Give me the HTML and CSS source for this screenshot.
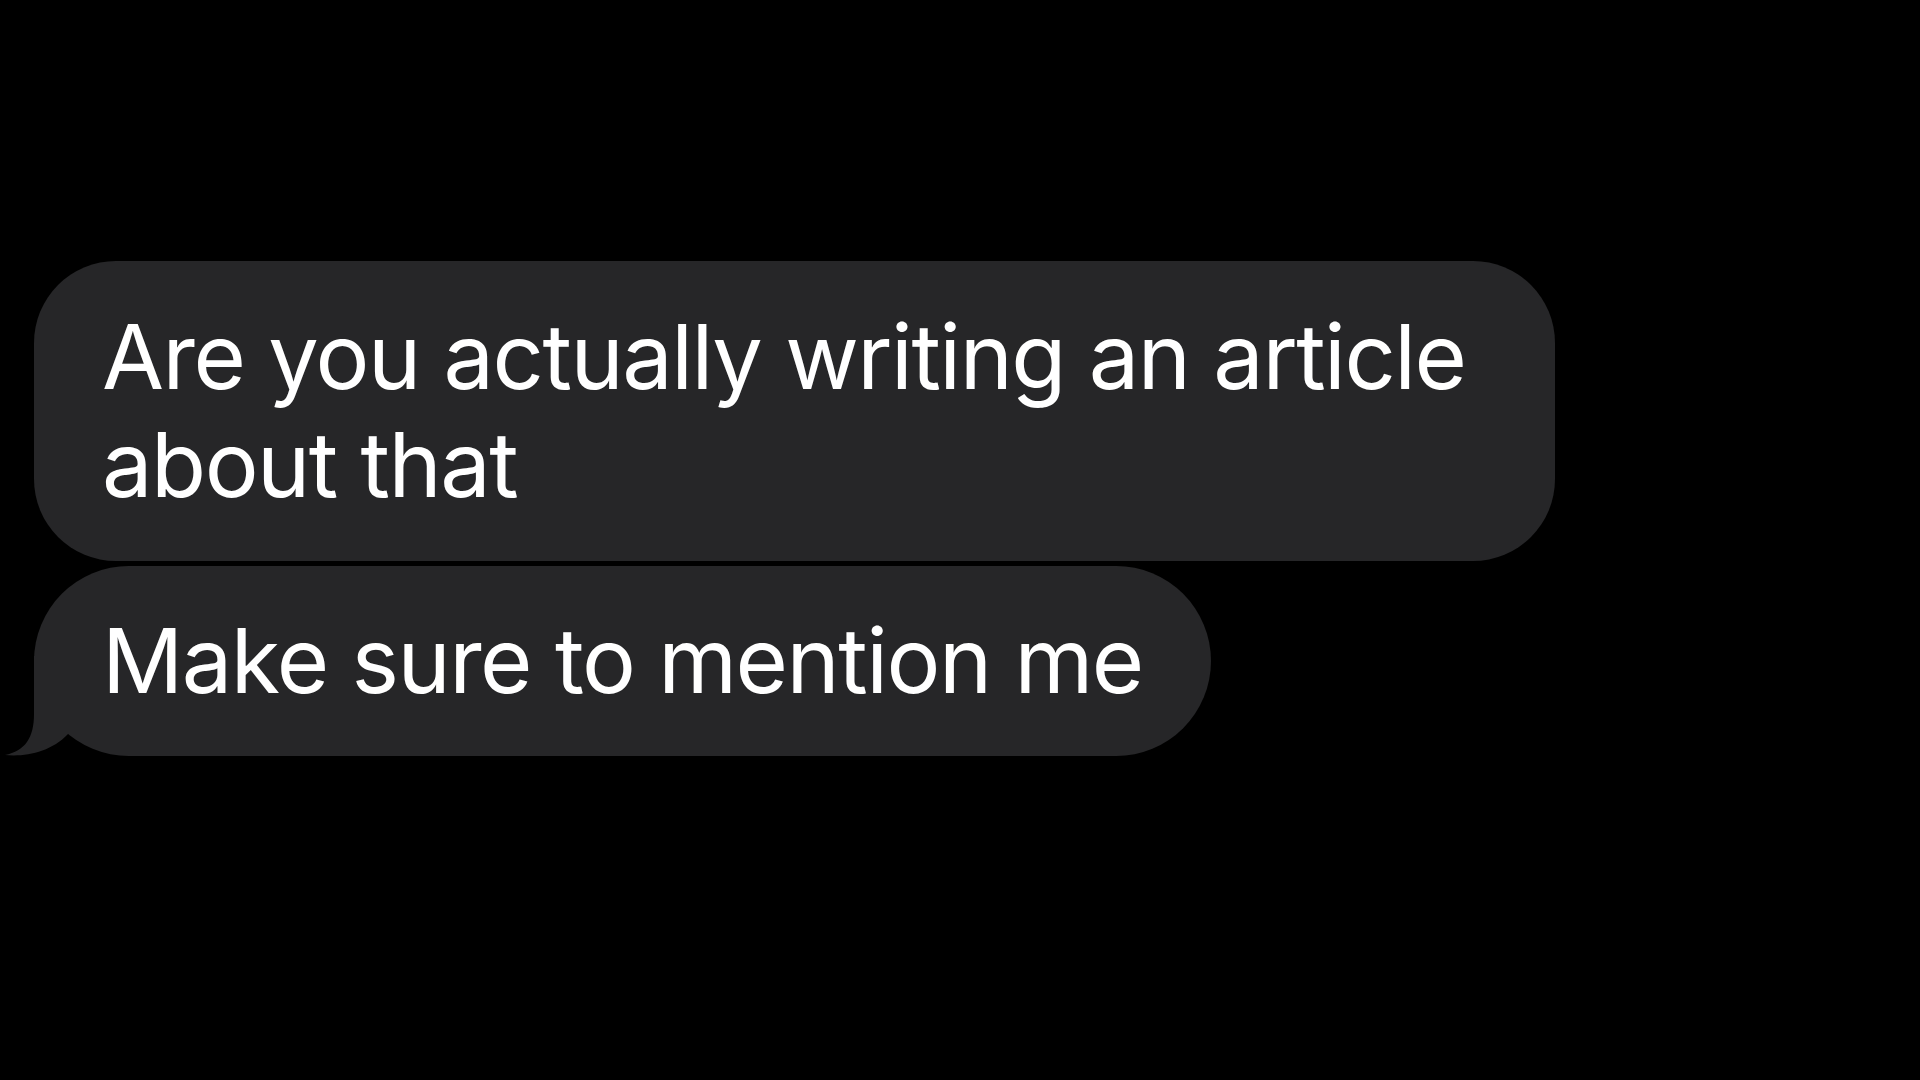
FILE: index.html
```html
<!DOCTYPE html>
<html lang="en">
<head>
<meta charset="utf-8">
<title>Messages</title>
<link rel="stylesheet" href="styles.css">
</head>
<body>
<main class="thread">
  <div class="bubble wide">Are you actually writing an article about that</div>
  <div class="bubble pill last">Make sure to mention me<svg class="tail" width="70" height="100" viewBox="0 0 70 100" aria-hidden="true"><path d="M30 0 L30 58 C30 82 21 95 1 99 C22 101 47 96 64 78 L64 0 Z"/></svg></div>
</main>
</body>
</html>
```
FILE: styles.css
```css
html, body {
  margin: 0;
  padding: 0;
  background: #000;
}
body {
  width: 1920px;
  height: 1080px;
  overflow: hidden;
  font-family: "Inter", "Noto Sans", sans-serif;
}
.thread {
  display: flex;
  flex-direction: column;
  align-items: flex-start;
  gap: 5px;
  padding: 261px 0 0 34px;
}
.bubble {
  position: relative;
  box-sizing: border-box;
  background: #262628;
  color: #fff;
  font-size: 90px;
  line-height: 108px;
  letter-spacing: -1.5px;
  padding: 42px 68px;
  border-radius: 82px;
}
.wide {
  width: 1521px;
  padding-right: 40px;
}
.pill {
  padding: 41px 68px;
  border-radius: 96px;
}
.tail {
  position: absolute;
  left: -30px;
  bottom: 0;
  fill: #262628;
}
```
